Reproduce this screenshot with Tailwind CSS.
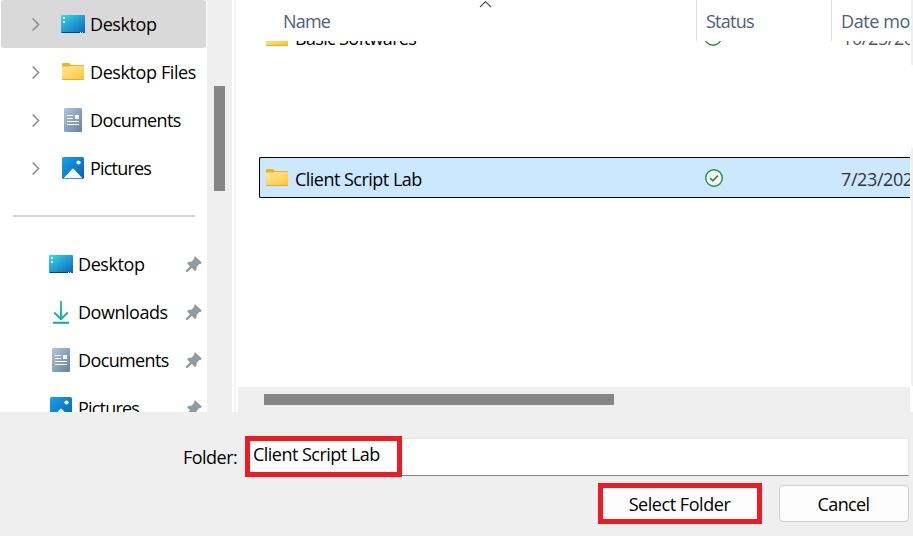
<!DOCTYPE html>
<html lang="en">
<head>
<meta charset="utf-8">
<title>Select Folder</title>
<script src="https://cdn.jsdelivr.net/npm/@tailwindcss/browser@4"></script>
</head>
<body class="w-[913px] h-[539px] overflow-hidden bg-white font-['Open_Sans','Noto_Sans',sans-serif] text-[18px] leading-[24px] tracking-[-0.4px] text-black whitespace-nowrap">
<svg class="absolute w-0 h-0">
  <defs>
    <linearGradient id="gd" x1="0" y1="0" x2="1" y2="1"><stop offset="0" stop-color="#36dbe6"/><stop offset="1" stop-color="#0c62bd"/></linearGradient>
    <linearGradient id="gf" x1="0" y1="0" x2="1" y2="1"><stop offset="0" stop-color="#ffe79b"/><stop offset="1" stop-color="#ffc634"/></linearGradient>
    <linearGradient id="gc" x1="0" y1="0" x2="1" y2="1"><stop offset="0" stop-color="#b3c6dc"/><stop offset="1" stop-color="#6381a3"/></linearGradient>
    <linearGradient id="gp" x1="0" y1="0" x2="1" y2="1"><stop offset="0" stop-color="#1ba2e8"/><stop offset="1" stop-color="#0560b5"/></linearGradient>
    <linearGradient id="gl" x1="0" y1="0" x2="0" y2="24" gradientUnits="userSpaceOnUse"><stop offset="0" stop-color="#3bc98c"/><stop offset="1" stop-color="#12a39a"/></linearGradient>
  </defs>
  <symbol id="desktop" viewBox="0 0 24 24"><rect y="3" width="24" height="18" rx="1" fill="url(#gd)"/><path d="M.5 20H24v.2a.8.8 0 0 1-.8.8H.8Z" fill="#0b4678"/><path d="M2 5h2v2H2zM2 9h2v2H2z" fill="#fff"/><path d="M19 20h1v1h-1zM21 20h1v1h-1z" fill="#d8ecfa"/></symbol>
  <symbol id="folder" viewBox="0 0 24 24"><path d="M1 4a1 1 0 0 1 1-1h6l2 2h12a1 1 0 0 1 1 1v3H1Z" fill="#f5b21b"/><path d="M1 6.500h7.500L10 6h13v13a1 1 0 0 1-1 1H2a1 1 0 0 1-1-1Z" fill="url(#gf)"/><path d="M1 19h22a1 1 0 0 1-1 1H2a1 1 0 0 1-1-1Z" fill="#efaa1d"/></symbol>
  <symbol id="document" viewBox="0 0 24 24"><rect x="3" width="18" height="24" rx="1.300" fill="url(#gc)"/><path d="M6 7.500h6M6 10.500h6M6 13.500h12M6 16.500h12" stroke="#fff" stroke-width="1"/><path d="M14 7h4v4h-4z" fill="#fff"/></symbol>
  <symbol id="picture" viewBox="0 0 24 24"><rect x="1" y="1" width="22" height="22" rx="1.500" fill="url(#gp)"/><path d="m2.500 22.200 8.700-9.200a1.100 1.100 0 0 1 1.600 0l8.700 9.200Z" fill="#f2f8fe"/><circle cx="17.500" cy="6.500" r="2.100" fill="#fff"/></symbol>
  <symbol id="download" viewBox="0 0 24 24"><path d="M12 1v18M5.200 12.500l6.800 6.700 6.800-6.700M4 22.800h16" fill="none" stroke="url(#gl)" stroke-width="2"/></symbol>
  <symbol id="pin" viewBox="0 0 16 16"><path d="M9.300.4 15.800 6.500 14.600 8l-1.300-.1-2.600 2.800-.5 3.800-1.400.4-3-3L1.400 16H0v-1.400L4 10.300 1.200 7.400l.8-1.500 3.700-.5 2.700-2.800L8.200 1Z" fill="#8f9ba3"/></symbol>
  <symbol id="chevron" viewBox="0 0 8 14"><path d="m.6 1.500 6 6-6 6" fill="none" stroke="#8a8a8a" stroke-width="1.500"/></symbol>
  <symbol id="check" viewBox="0 0 20 20"><circle cx="10" cy="10" r="8.300" fill="#fff" fill-opacity=".85" stroke="#23913b" stroke-width="1.400"/><path d="m6 10 2.800 2.800 5.200-5.200" fill="none" stroke="#23913b" stroke-width="1.700"/></symbol>
</svg>

<div class="flex h-[412px] bg-white">
  <nav class="w-[207px] h-full shrink-0 overflow-hidden">
    <div class="flex items-center h-12 ml-px w-[205px] rounded-[3px] bg-[#d9d9d9] pl-[31px]"><svg class="w-2 h-[14px] mr-[21px]"><use href="#chevron"/></svg><svg class="w-6 h-6 mr-[5px]"><use href="#desktop"/></svg><span>Desktop</span></div>
    <div class="flex items-center h-12 pl-8"><svg class="w-2 h-[14px] mr-[21px]"><use href="#chevron"/></svg><svg class="w-6 h-6 mr-[5px]"><use href="#folder"/></svg><span>Desktop Files</span></div>
    <div class="flex items-center h-12 pl-8"><svg class="w-2 h-[14px] mr-[21px]"><use href="#chevron"/></svg><svg class="w-6 h-6 mr-[5px]"><use href="#document"/></svg><span class="tracking-[-0.62px]">Documents</span></div>
    <div class="flex items-center h-12 pl-8"><svg class="w-2 h-[14px] mr-[21px]"><use href="#chevron"/></svg><svg class="w-6 h-6 mr-[5px]"><use href="#picture"/></svg><span class="tracking-[-0.8px]">Pictures</span></div>
    <div class="mt-[23px] mb-[23px] ml-[13px] w-[182px] h-[2px] bg-[#d4d4d4]"></div>
    <div class="flex items-center h-12 pl-[49px] pr-[5px]"><svg class="w-6 h-6 mr-[5px]"><use href="#desktop"/></svg><span class="flex-1">Desktop</span><svg class="w-4 h-4"><use href="#pin"/></svg></div>
    <div class="flex items-center h-12 pl-[49px] pr-[5px]"><svg class="w-6 h-6 mr-[5px]"><use href="#download"/></svg><span class="flex-1 tracking-[-0.47px]">Downloads</span><svg class="w-4 h-4"><use href="#pin"/></svg></div>
    <div class="flex items-center h-12 pl-[49px] pr-[5px]"><svg class="w-6 h-6 mr-[5px]"><use href="#document"/></svg><span class="flex-1 tracking-[-0.62px]">Documents</span><svg class="w-4 h-4"><use href="#pin"/></svg></div>
    <div class="flex items-center h-12 pl-[49px] pr-[5px]"><svg class="w-6 h-6 mr-[5px]"><use href="#picture"/></svg><span class="flex-1 tracking-[-0.8px]">Pictures</span><svg class="w-4 h-4"><use href="#pin"/></svg></div>
  </nav>
  <div class="w-[25px] shrink-0 bg-[#efefef] pt-[86px] pl-[7px]"><div class="w-[11px] h-[105px] bg-[#858585]"></div></div>
  <div class="w-[2px] shrink-0 ml-[2px] mr-[2px] bg-[#f5f5f5]"></div>

  <main class="w-[673px] shrink-0 flex flex-col">
    <div class="relative flex h-[41px] shrink-0 text-[#4c607a]">
      <div class="w-[458px] pl-[45px] pt-[9px] tracking-[-0.8px]">Name</div>
      <div class="w-[135px] border-l border-[#e2e2e2] pl-[9px] pt-[9px] tracking-[-0.75px]">Status</div>
      <div class="w-[79px] overflow-hidden border-l border-[#e2e2e2] pl-[9px] pt-[9px]">Date mo</div>
      <svg class="absolute left-[241px] top-0 w-[13px] h-[8px]" viewBox="0 0 13 8"><path d="m1 7 5.500-5.500L12 7" fill="none" stroke="#555" stroke-width="1.200"/></svg>
    </div>
    <div class="flex h-[5px] shrink-0 items-end overflow-hidden pl-[27px]">
      <svg class="w-6 h-6 -mb-[4px] mr-[6px] shrink-0"><use href="#folder"/></svg><span class="w-[408px] shrink-0 -mb-[4px] tracking-[-0.67px]">Basic Softwares</span><svg class="w-5 h-5 -mb-px shrink-0"><use href="#check"/></svg><span class="ml-[119px] w-[68px] overflow-hidden -mb-[4px] text-[#555]">10/25/2022</span>
    </div>
    <div class="mt-[111px] ml-[21px] w-[651px] h-[41px] shrink-0 flex items-center overflow-hidden rounded-l-[2px] border border-r-0 border-black bg-[#cce8ff] pl-[5px]">
      <svg class="w-6 h-6 mr-[6px] shrink-0"><use href="#folder"/></svg><span class="w-[409px] shrink-0 pt-[3px] tracking-[-0.52px]">Client Script Lab</span><svg class="w-5 h-5 shrink-0"><use href="#check"/></svg><span class="ml-[117px] pt-[3px] text-[#333]">7/23/2022</span>
    </div>
    <div class="mt-auto w-[672px] h-[25px] bg-[#efefef] pt-[7px] pl-[26px]"><div class="w-[350px] h-[11px] bg-[#858585]"></div></div>
  </main>
  <div class="w-[2px] shrink-0"><div class="h-[65px] bg-[#efefef]"></div><div class="h-[83px]"></div><div class="h-[238px] bg-[#efefef]"></div></div>
</div>

<footer class="h-[124px] bg-[#efefef]">
  <div class="flex pt-6">
    <label class="w-[245px] pl-[183px] pt-[9px] tracking-[-0.52px]">Folder:</label>
    <div class="w-[157px] h-[41px] border-[5px] border-[#ed1c24] bg-white pl-[3px] pt-px tracking-[-0.52px]">Client Script Lab</div>
    <div class="mt-[2px] w-[507px] h-[38px] bg-white border border-l-0 border-t-[#e7e7e7] border-r-[#e5e5e5] border-b-[#858585]"></div>
  </div>
  <div class="flex pl-[598px] pt-[6px]">
    <button class="w-[164px] h-[41px] border-[5px] border-[#ed1c24] bg-[#fdfdfd] pt-px tracking-[-0.45px] pr-px">Select Folder</button>
    <button class="ml-[17px] mt-[2px] w-[130px] h-[37px] rounded-[4px] border border-[#d0d0d0] bg-[#fdfdfd] pt-px pr-px tracking-[-0.65px]">Cancel</button>
  </div>
</footer>
</body>
</html>
